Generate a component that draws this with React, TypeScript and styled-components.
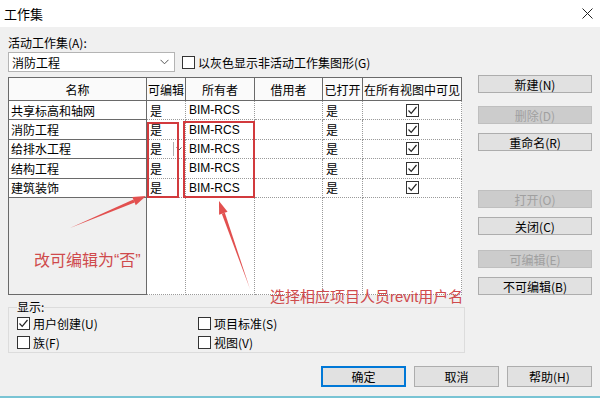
import styled, { createGlobalStyle } from 'styled-components';

const GlobalStyle = createGlobalStyle`
  html, body { margin: 0; padding: 0; }
  body {
    background: #f0f0f0;
    font-family: "Noto Sans CJK SC", "Liberation Sans", sans-serif;
    font-size: 12px;
    color: #000;
  }
`;

const Window = styled.div`
  position: relative;
  width: 600px;
  height: 398px;
  box-sizing: border-box;
  background: #f0f0f0;
  border-bottom: 2px solid #79c4d4;
  overflow: hidden;
  display: flex;
  flex-direction: column;
`;

const TitleBar = styled.div`
  height: 27px;
  flex: none;
  background: #fff;
  display: flex;
  align-items: center;
  justify-content: space-between;
  padding: 0 7px 0 4px;
  font-size: 13px;
`;

const Body = styled.div`
  padding: 8px 8px 0 8px;
  display: flex;
  flex-direction: column;
`;

const MainRow = styled.div`
  display: flex;
  gap: 13px;
`;

const LeftCol = styled.div`
  width: 457px;
  display: flex;
  flex-direction: column;
`;

const RightCol = styled.div`
  width: 114px;
  padding-top: 40px;
  display: flex;
  flex-direction: column;
`;

const Label = styled.div`
  height: 15px;
  line-height: 15px;
  margin-bottom: 2px;
`;

const ComboRow = styled.div`
  display: flex;
  align-items: center;
  height: 20px;
  gap: 7px;
`;

const Combo = styled.div`
  width: 167px;
  height: 20px;
  box-sizing: border-box;
  background: #fff;
  border: 1px solid #b4b4b4;
  display: flex;
  align-items: center;
  justify-content: space-between;
  padding: 0 5px 0 3px;
`;

const CheckLabel = styled.label`
  display: flex;
  align-items: center;
  gap: 3px;
  white-space: nowrap;
`;

const Box = styled.span`
  width: 13px;
  height: 13px;
  box-sizing: border-box;
  border: 1px solid #333;
  background: #fff;
  display: inline-flex;
  align-items: center;
  justify-content: center;
  flex: none;
`;

const Table = styled.div`
  margin-top: 5px;
  width: 454px;
  height: 218px;
  box-sizing: border-box;
  border-top: 1px solid #6a6a6a;
  border-left: 1px solid #6a6a6a;
  background: #fff;
  display: grid;
  grid-template-columns: 138px 39px 69px 68px 40px 99px;
  grid-template-rows: 23px repeat(5, 19.4px) 1fr;
`;

type CellKind = 'head' | 'name' | 'data' | 'nameFill' | 'dataFill';

const solid = (k: CellKind) => k === 'head' || k === 'name' || k === 'nameFill';

const Cell = styled.div<{ $kind: CellKind; $center?: boolean }>`
  box-sizing: border-box;
  display: flex;
  align-items: center;
  justify-content: ${(p) => (p.$center || p.$kind === 'head' ? 'center' : 'flex-start')};
  padding: 0 ${(p) => (p.$kind === 'name' ? '2px' : '3px')};
  white-space: nowrap;
  overflow: hidden;
  position: relative;
  font-family: "Liberation Sans", "Noto Sans CJK SC", sans-serif;
  background: ${(p) => (p.$kind === 'head' ? '#fafafa' : p.$kind === 'nameFill' ? '#f0f0f0' : '#fff')};
  border-right: ${(p) => (solid(p.$kind) ? '1px solid #6a6a6a' : '1px dotted #9a9a9a')};
  border-bottom: ${(p) => (solid(p.$kind) ? '1px solid #6a6a6a' : '1px dotted #9a9a9a')};
`;

const DropBtn = styled.span`
  position: absolute;
  right: 2px;
  top: 2px;
  bottom: 2px;
  width: 9px;
  border-left: 1px solid #b0b0b0;
  display: flex;
  align-items: center;
  justify-content: center;
`;

const Group = styled.fieldset`
  margin: 5px 0 0 0;
  padding: 0 8px 0 8px;
  width: 457px;
  box-sizing: border-box;
  border: 1px solid #dcdcdc;
  display: grid;
  grid-template-columns: 181px 1fr;
  grid-auto-rows: 19px;
  align-items: center;
`;

const Legend = styled.legend`
  padding: 0;
  line-height: 14px;
`;

const RightButton = styled.div<{ $top: number; $disabled?: boolean }>`
  margin-top: ${(p) => p.$top}px;
  height: 18px;
  box-sizing: border-box;
  display: flex;
  align-items: center;
  justify-content: center;
  background: ${(p) => (p.$disabled ? '#cccccc' : '#e1e1e1')};
  border: 1px solid ${(p) => (p.$disabled ? '#bfbfbf' : '#adadad')};
  color: ${(p) => (p.$disabled ? '#a0a0a0' : '#000')};
`;

const Footer = styled.div`
  margin-top: 13px;
  display: flex;
  justify-content: flex-end;
  gap: 8px;
`;

const FootButton = styled.div<{ $default?: boolean }>`
  width: 85px;
  height: 21px;
  box-sizing: border-box;
  display: flex;
  align-items: center;
  justify-content: center;
  background: #e1e1e1;
  border: ${(p) => (p.$default ? '2px solid #0078d7' : '1px solid #adadad')};
`;

const Overlay = styled.svg`
  position: absolute;
  left: 0;
  top: 0;
  pointer-events: none;
`;

const Note = styled.span<{ $x: number; $y: number; $size: number }>`
  position: absolute;
  left: ${(p) => p.$x}px;
  top: ${(p) => p.$y}px;
  font-family: "Liberation Sans", "Noto Sans CJK SC", sans-serif;
  font-size: ${(p) => p.$size}px;
  line-height: 1;
  color: #cf4a4c;
  white-space: nowrap;
`;

const Chevron = () => (
  <svg width="9" height="6" viewBox="0 0 9 6">
    <path d="M0.5 0.8 L4.5 4.8 L8.5 0.8" fill="none" stroke="#555" strokeWidth="1" />
  </svg>
);

const Check = ({ on }: { on?: boolean }) => (
  <Box>
    {on && (
      <svg width="11" height="11" viewBox="0 0 11 11">
        <path d="M1.5 5.5 L4.2 8.3 L9.5 2" fill="none" stroke="#222" strokeWidth="1.2" />
      </svg>
    )}
  </Box>
);

const rows = [
  { name: '共享标高和轴网', edit: '是', owner: 'BIM-RCS', open: '是' },
  { name: '消防工程', edit: '是', owner: 'BIM-RCS', open: '是' },
  { name: '给排水工程', edit: '是', owner: 'BIM-RCS', open: '是', drop: true },
  { name: '结构工程', edit: '是', owner: 'BIM-RCS', open: '是' },
  { name: '建筑装饰', edit: '是', owner: 'BIM-RCS', open: '是' },
];

const headers = ['名称', '可编辑', '所有者', '借用者', '已打开', '在所有视图中可见'];

function arrow(x1: number, y1: number, x2: number, y2: number) {
  const dx = x2 - x1;
  const dy = y2 - y1;
  const len = Math.hypot(dx, dy);
  const ux = dx / len;
  const uy = dy / len;
  const bx = x2 - ux * 13;
  const by = y2 - uy * 13;
  const px = -uy;
  const py = ux;
  return {
    shaft: `${x1},${y1} ${bx + px * 1.6},${by + py * 1.6} ${bx - px * 1.6},${by - py * 1.6}`,
    head: `${x2},${y2} ${bx + px * 4.5},${by + py * 4.5} ${bx - px * 4.5},${by - py * 4.5}`,
  };
}

const a1 = arrow(70, 228, 146, 196);
const a2 = arrow(250, 289, 219, 201);

export default function App() {
  return (
    <>
      <GlobalStyle />
      <Window>
        <TitleBar>
          <span>工作集</span>
          <svg width="11" height="11" viewBox="0 0 11 11">
            <path d="M0.5 0.5 L10.5 10.5 M10.5 0.5 L0.5 10.5" stroke="#222" strokeWidth="1" />
          </svg>
        </TitleBar>
        <Body>
          <MainRow>
            <LeftCol>
              <Label>活动工作集(A):</Label>
              <ComboRow>
                <Combo>
                  <span>消防工程</span>
                  <Chevron />
                </Combo>
                <CheckLabel>
                  <Check />
                  以灰色显示非活动工作集图形(G)
                </CheckLabel>
              </ComboRow>
              <Table>
                {headers.map((h) => (
                  <Cell key={h} $kind="head">
                    {h}
                  </Cell>
                ))}
                {rows.map((r) => [
                  <Cell key={r.name + '-n'} $kind="name">{r.name}</Cell>,
                  <Cell key={r.name + '-e'} $kind="data">
                    {r.edit}
                    {r.drop && (
                      <DropBtn>
                        <svg width="6" height="4" viewBox="0 0 6 4">
                          <path d="M0.5 0.5 L3 3 L5.5 0.5" fill="none" stroke="#555" />
                        </svg>
                      </DropBtn>
                    )}
                  </Cell>,
                  <Cell key={r.name + '-o'} $kind="data">{r.owner}</Cell>,
                  <Cell key={r.name + '-b'} $kind="data" />,
                  <Cell key={r.name + '-p'} $kind="data">{r.open}</Cell>,
                  <Cell key={r.name + '-v'} $kind="data" $center>
                    <Check on />
                  </Cell>,
                ])}
                <Cell $kind="nameFill" />
                <Cell $kind="dataFill" />
                <Cell $kind="dataFill" />
                <Cell $kind="dataFill" />
                <Cell $kind="dataFill" />
                <Cell $kind="dataFill" />
              </Table>
              <Group>
                <Legend>显示:</Legend>
                <CheckLabel>
                  <Check on />
                  用户创建(U)
                </CheckLabel>
                <CheckLabel>
                  <Check />
                  项目标准(S)
                </CheckLabel>
                <CheckLabel>
                  <Check />
                  族(F)
                </CheckLabel>
                <CheckLabel>
                  <Check />
                  视图(V)
                </CheckLabel>
              </Group>
            </LeftCol>
            <RightCol>
              <RightButton $top={0}>新建(N)</RightButton>
              <RightButton $top={13} $disabled>删除(D)</RightButton>
              <RightButton $top={9}>重命名(R)</RightButton>
              <RightButton $top={39} $disabled>打开(O)</RightButton>
              <RightButton $top={9}>关闭(C)</RightButton>
              <RightButton $top={15} $disabled>可编辑(E)</RightButton>
              <RightButton $top={9}>不可编辑(B)</RightButton>
            </RightCol>
          </MainRow>
          <Footer>
            <FootButton $default>确定</FootButton>
            <FootButton>取消</FootButton>
            <FootButton>帮助(H)</FootButton>
          </Footer>
        </Body>
        <Overlay width="600" height="398" viewBox="0 0 600 398">
          <rect x="148" y="123" width="30" height="74" fill="none" stroke="#d23a3d" strokeWidth="2" />
          <rect x="184" y="122" width="70" height="75" fill="none" stroke="#d23a3d" strokeWidth="2" />
          <polygon points={a1.shaft} fill="#e2504f" />
          <polygon points={a1.head} fill="#e2504f" />
          <polygon points={a2.shaft} fill="#e2504f" />
          <polygon points={a2.head} fill="#e2504f" />
        </Overlay>
        <Note $x={34} $y={253} $size={16}>改可编辑为“否”</Note>
        <Note $x={270} $y={289} $size={15}>选择相应项目人员revit用户名</Note>
      </Window>
    </>
  );
}
